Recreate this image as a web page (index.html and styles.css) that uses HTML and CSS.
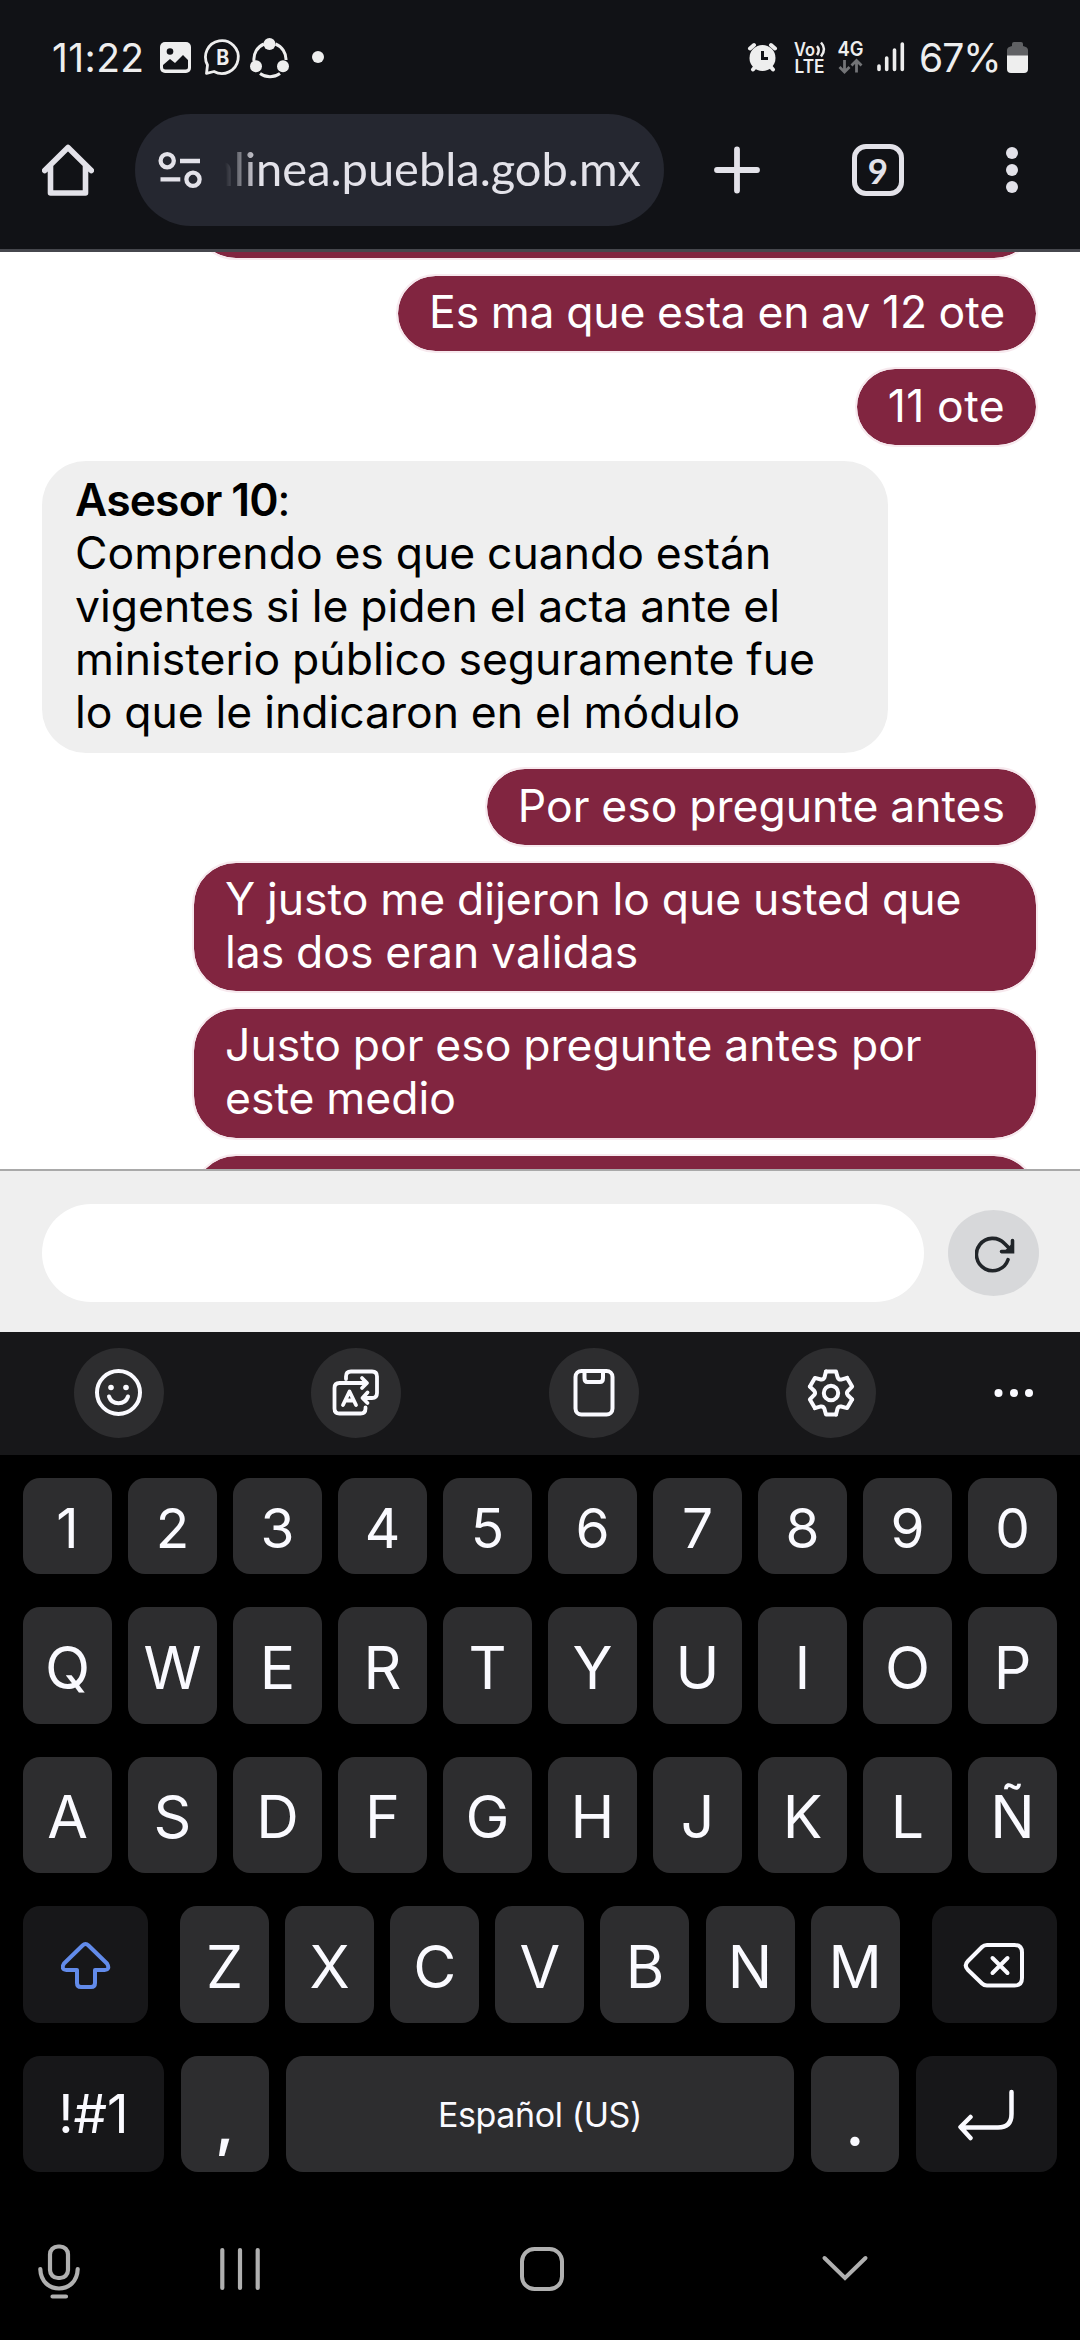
FILE: index.html
```
<!DOCTYPE html>
<html lang="es">
<head>
<meta charset="utf-8">
<title>Chat en línea</title>
<link rel="stylesheet" href="styles.css">
</head>
<body>
<header class="browser">
  <div class="status">
    <span class="clock">11:22</span>
    <svg class="notif" width="165" height="40" viewBox="160 38 165 40">
      <rect x="160" y="42" width="31" height="31" rx="5" fill="#eee"/>
      <circle cx="170" cy="51.5" r="3.3" fill="#111216"/>
      <path d="M163 65L170 59L175 63L183 55L188 60V67Q188 69.500 185.500 69.500H165.500Q163 69.500 163 67Z" fill="#111216"/>
      <path d="M207.500 65A16.400 16.400 0 1 1 214 71.500L206.500 73.300Z" fill="none" stroke="#eee" stroke-width="2.800" stroke-linejoin="round"/>
      <text x="216.300" y="65" font-family="Inter" font-weight="700" font-size="21" fill="#eee" textLength="13" lengthAdjust="spacingAndGlyphs">B</text>
      <g fill="none" stroke="#eee" stroke-width="3">
        <path d="M254 61A16.500 16.500 0 0 1 264 44M275.500 44A16.500 16.500 0 0 1 286 60M260 73.500A17 17 0 0 0 280 73.500"/>
      </g>
      <g fill="#eee"><circle cx="269.500" cy="44" r="6"/><circle cx="256" cy="66.200" r="6"/><circle cx="283" cy="66.200" r="6"/><circle cx="318" cy="57" r="6"/></g>
    </svg>
    <svg class="signals" width="159" height="36" viewBox="747 40 159 36">
      <g stroke="#eee" stroke-width="4" stroke-linecap="round" fill="none">
        <path d="M750 48.500L754 45M775 48.500L771 45M753 69.500L756 66M773 69.500L770 66"/>
      </g>
      <circle cx="762.500" cy="58" r="13" fill="#eee"/>
      <path d="M762.500 51V58.500H768" fill="none" stroke="#111216" stroke-width="3"/>
      <g fill="#eee" font-family="Inter" font-weight="600">
        <text x="794" y="55.500" font-size="18" textLength="21" lengthAdjust="spacingAndGlyphs">Vo</text>
        <text x="794.500" y="72.500" font-size="18.500" textLength="30" lengthAdjust="spacingAndGlyphs">LTE</text>
        <text x="837.500" y="55.500" font-size="20" textLength="26" lengthAdjust="spacingAndGlyphs">4G</text>
      </g>
      <path d="M817 46Q820.500 50 817 55M821 42.500Q827 49 821 56.500" fill="none" stroke="#eee" stroke-width="2.500"/>
      <path d="M844.500 60V71M839.500 67L844.500 72L849.500 67M856.500 72.500V61M851.500 65.500L856.500 60.500L861.500 65.500" fill="none" stroke="#737477" stroke-width="2.800"/>
      <path d="M879 66V69.500M886.700 58V69.500M894.500 50V69.500M902.300 44V69.500" stroke="#eee" stroke-width="3.600" stroke-linecap="round"/>
    </svg>
    <span class="percent">67%</span>
    <svg width="21" height="31" viewBox="1007 42 21 31">
      <path d="M1012 46V44Q1012 42 1014 42H1021Q1023 42 1023 44V46Q1028 47 1028 50V56H1007V50Q1007 47 1012 46Z" fill="#606164"/>
      <path d="M1007 55.500H1028V69Q1028 73 1024 73H1011Q1007 73 1007 69Z" fill="#eee"/>
    </svg>
  </div>
  <div class="toolbar">
    <svg class="home" width="52" height="54" viewBox="42 143 52 54">
      <path d="M44.700 170.500L68 147.500L91.300 170.500M50.500 166V193H85.500V166" fill="none" stroke="#e3e2e9" stroke-width="5.600" stroke-linecap="round" stroke-linejoin="round"/>
    </svg>
    <div class="omnibox">
      <svg width="44" height="38" viewBox="158 151 44 38">
        <g fill="none" stroke="#e3e2e9" stroke-width="4.300">
          <circle cx="167.200" cy="160.700" r="6.600"/><circle cx="193" cy="179.300" r="6.600"/>
          <path d="M180 161H200M160.500 179.300H180.300"/>
        </g>
      </svg>
      <div class="url"><span>enlinea.puebla.gob.mx</span></div>
    </div>
    <svg class="plus" width="46" height="48" viewBox="714 146 46 48">
      <path d="M717 170H757M737 149.500V190.500" stroke="#e3e2e9" stroke-width="5.800" stroke-linecap="round"/>
    </svg>
    <div class="tabs">9</div>
    <svg class="more" width="14" height="48" viewBox="1005 146 14 48" fill="#e3e2e9">
      <circle cx="1012" cy="153" r="6"/><circle cx="1012" cy="170" r="6"/><circle cx="1012" cy="187" r="6"/>
    </svg>
  </div>
</header>

<main class="chat">
  <div class="msg out wide cut-top"></div>
  <div class="msg out">Es ma que esta en av 12 ote</div>
  <div class="msg out short">11 ote</div>
  <div class="msg in"><b>Asesor 10</b>:<br>Comprendo es que cuando están<br>vigentes si le piden el acta ante el<br>ministerio público seguramente fue<br>lo que le indicaron en el módulo</div>
  <div class="msg out">Por eso pregunte antes</div>
  <div class="msg out wide">Y justo me dijeron lo que usted que<br>las dos eran validas</div>
  <div class="msg out wide">Justo por eso pregunte antes por<br>este medio</div>
  <div class="msg out wide cut-bottom"></div>
</main>

<div class="composer">
  <input class="field" type="text">
  <button class="reload">
    <svg width="40" height="38" viewBox="974 1237 40 38">
      <path d="M1007 1260.700A16.200 16.200 0 1 1 1003.500 1244.500L1011 1252M1000.500 1252.600H1011.500V1241.500" fill="none" stroke="#212529" stroke-width="3.600" stroke-linecap="round"/>
      <path d="M1003 1252.500H1011.500V1244Z" fill="#212529"/>
    </svg>
  </button>
</div>

<section class="keyboard">
  <div class="tools">
    <span class="tool"><svg width="48" height="50" viewBox="95 1368 48 50">
      <circle cx="118.500" cy="1392.500" r="21.500" fill="none" stroke="#fafaff" stroke-width="4"/>
      <circle cx="111" cy="1387.500" r="2.800" fill="#fafaff"/><circle cx="126" cy="1387.500" r="2.800" fill="#fafaff"/>
      <path d="M109 1396.500C112 1405.500 125 1405.500 128 1396.500" fill="none" stroke="#fafaff" stroke-width="4" stroke-linecap="round"/>
    </svg></span>
    <span class="tool"><svg width="50" height="50" viewBox="331 1368 50 50">
      <g fill="none" stroke="#fafaff" stroke-width="3.800" stroke-linecap="round" stroke-linejoin="round">
        <path d="M346 1379V1376.500Q346 1371.500 351 1371.500H372Q377 1371.500 377 1376.500V1393Q377 1398 372 1398H363M367.500 1392.500L362.500 1398L367.500 1403"/>
        <path d="M365.500 1407.500V1408.500Q365.500 1413.500 360.500 1413.500H339.500Q334.500 1413.500 334.500 1408.500V1388Q334.500 1383 339.500 1383H366M362 1378L367 1383L362 1388"/>
        <path d="M343 1405L349.500 1391.500L356 1405M345.500 1400.500H353.500"/>
      </g>
    </svg></span>
    <span class="tool"><svg width="42" height="50" viewBox="573 1368 42 50">
      <g fill="none" stroke="#fafaff" stroke-width="4" stroke-linejoin="round">
        <rect x="575.500" y="1371" width="37" height="43.500" rx="6"/>
        <path d="M584.500 1372V1378Q584.500 1382 587.500 1382H600Q603 1382 603 1378V1372"/>
      </g>
    </svg></span>
    <span class="tool"><svg width="50" height="50" viewBox="-25 -25 50 50">
      <g fill="none" stroke="#fafaff" stroke-width="4" stroke-linejoin="round" stroke-linecap="round">
        <path id="tooth" d="M-5 -21.500H5L6.700 -15.500Q7.600 -13.200 10 -13.400L16.100 -15.100"/>
        <use href="#tooth" transform="rotate(60)"/><use href="#tooth" transform="rotate(120)"/><use href="#tooth" transform="rotate(180)"/><use href="#tooth" transform="rotate(240)"/><use href="#tooth" transform="rotate(300)"/>
        <circle r="7.200"/>
      </g>
    </svg></span>
    <svg class="dots" width="40" height="10" viewBox="0 0 40 10" fill="#fafaff"><circle cx="4.500" cy="5" r="4"/><circle cx="20" cy="5" r="4"/><circle cx="35" cy="5" r="4"/></svg>
  </div>
  <div class="keys">
    <div class="row digits"><span class="key">1</span><span class="key">2</span><span class="key">3</span><span class="key">4</span><span class="key">5</span><span class="key">6</span><span class="key">7</span><span class="key">8</span><span class="key">9</span><span class="key">0</span></div>
    <div class="row"><span class="key">Q</span><span class="key">W</span><span class="key">E</span><span class="key">R</span><span class="key">T</span><span class="key">Y</span><span class="key">U</span><span class="key">I</span><span class="key">O</span><span class="key">P</span></div>
    <div class="row"><span class="key">A</span><span class="key">S</span><span class="key">D</span><span class="key">F</span><span class="key">G</span><span class="key">H</span><span class="key">J</span><span class="key">K</span><span class="key">L</span><span class="key">Ñ</span></div>
    <div class="row third">
      <span class="key dark"><svg class="shift" width="50" height="48" viewBox="61 1918 50 48"><path d="M82.500 1922.500Q85.500 1919.500 88.500 1922.500L107 1940.500Q110.500 1946.500 104.500 1947H95V1960Q95 1964 91 1964H81Q77 1964 77 1960V1947H66.500Q60.500 1946.500 64 1940.500Z" fill="none" stroke="#628bea" stroke-width="4" stroke-linejoin="round"/></svg></span>
      <span class="key">Z</span><span class="key">X</span><span class="key">C</span><span class="key">V</span><span class="key">B</span><span class="key">N</span><span class="key">M</span>
      <span class="key dark"><svg width="62" height="46" viewBox="963 1941 62 46"><g fill="none" stroke="#fafaff" stroke-width="4" stroke-linejoin="round" stroke-linecap="round"><path d="M987 1944H1014.500Q1022 1944 1022 1951.500V1977Q1022 1984.500 1014.500 1984.500H987Q984 1984.500 982 1982.500L968 1969Q963.500 1964.500 968 1960L982 1946Q984 1944 987 1944Z"/><path d="M992.500 1957L1007.500 1972M1007.500 1957L992.500 1972"/></g></svg></span>
    </div>
    <div class="row bottom">
      <span class="key dark sym">!#1</span><span class="key punct">,</span><span class="key space">Español (US)</span><span class="key punct">.</span>
      <span class="key dark"><svg width="62" height="54" viewBox="957 2086 62 54"><path d="M1012.500 2091V2113Q1012.500 2126.500 999 2126.500H962M971.500 2116L961.500 2126L971.500 2137" fill="none" stroke="#fafaff" stroke-width="4.500" stroke-linecap="round" stroke-linejoin="round"/></svg></span>
    </div>
  </div>
  <nav class="nav">
    <svg class="mic" width="44" height="58" viewBox="37 2242 44 58"><g fill="none" stroke="#b0b0b0" stroke-width="4.200" stroke-linecap="round"><rect x="50" y="2246.500" width="18" height="31.500" rx="8"/><path d="M40.300 2269C41 2295 77 2295 77.700 2269M52.500 2296.500H66"/></g></svg>
    <svg class="recents" width="44" height="46" viewBox="218 2246 44 46"><path d="M222.300 2250V2288M240 2250V2288M257.700 2250V2288" stroke="#b0b0b0" stroke-width="4.200" stroke-linecap="round"/></svg>
    <svg class="circle" width="46" height="46" viewBox="519 2246 46 46"><rect x="522" y="2249" width="40" height="40" rx="12.500" fill="none" stroke="#b0b0b0" stroke-width="4"/></svg>
    <svg class="down" width="50" height="30" viewBox="820 2253 50 30"><path d="M824.500 2258L845 2278L865.500 2258" fill="none" stroke="#b0b0b0" stroke-width="4" stroke-linecap="round"/></svg>
  </nav>
</section>
</body>
</html>
```
FILE: styles.css
```
* { box-sizing: border-box; }
body { margin: 0; width: 1080px; height: 2340px; overflow: hidden; background: #000; display: flex; flex-direction: column; font-family: Inter, Roboto, sans-serif; }
svg { display: block; flex: none; }

.browser { height: 252px; flex: none; background: #111216; border-bottom: 3px solid #46474d; }
.status { height: 114px; display: flex; align-items: center; padding: 1px 52px 0 52px; color: #eee; font-size: 39px; line-height: 40px; }
.notif, .signals { overflow: visible; }
.clock { width: 108px; letter-spacing: 0.4px; }
.signals { margin-left: auto; }
.percent { width: 88px; margin-left: 13px; letter-spacing: -1px; white-space: nowrap; }
.toolbar { height: 112px; display: flex; align-items: center; padding: 0 61px 0 42px; color: #e3e2e9; }
.omnibox { width: 529px; height: 112px; margin-left: 41px; border-radius: 56px; background: #252730; display: flex; align-items: center; padding-left: 23px; }
.url { width: 416px; margin: -4px 0 0 23px; overflow: hidden; display: flex; justify-content: flex-end; font: 47px/60px Lato, sans-serif; white-space: nowrap; -webkit-mask-image: linear-gradient(90deg, transparent, #000 34px); mask-image: linear-gradient(90deg, transparent, #000 34px); }
.plus { margin-left: 50px; }
.tabs { width: 52px; height: 52px; margin-left: 92px; border: 5.500px solid #e3e2e9; border-radius: 14px; display: flex; align-items: center; justify-content: center; font: 700 35px/40px Lato, sans-serif; }
.more { margin-left: auto; }

.chat { height: 917px; flex: none; background: #fff; overflow: hidden; display: flex; flex-direction: column; gap: 14px; padding: 0 42px; font: 44.500px/52.900px Inter, sans-serif; }
.msg { flex: none; letter-spacing: 0; word-spacing: -0.7px; white-space: nowrap; }
.out { align-self: flex-end; color: #fff; background: #812540; background-clip: padding-box; border: 2px solid #f7e9ee; border-radius: 44px; padding: 10.200px 31px 12.400px; }
.out:nth-child(2) { letter-spacing: -0.12px; }
.short { letter-spacing: 0.4px; }
.wide { width: 846px; }
.cut-top { height: 132.400px; margin-top: -124.400px; }
.cut-bottom { height: 132.400px; }
.in { align-self: flex-start; width: 846px; color: #000; background: #efefef; border-radius: 44px; padding: 13.100px 32px 14.800px 33px; }
.in b { font-weight: 600; letter-spacing: -0.9px; }

.composer { height: 163px; flex: none; background: #efefef; border-top: 2px solid #a9a9a9; display: flex; align-items: center; padding: 2px 42px 0; }
.field { width: 882px; height: 98px; border: 0; border-radius: 49px; background: #fff; padding: 0 32px; }
.reload { width: 91px; height: 86px; margin: 0 -1px 0 auto; border: 0; border-radius: 50%; background: #d7d8da; padding: 4px 0 0 2px; display: flex; align-items: center; justify-content: center; }

.keyboard { flex: 1; background: #000; }
.tools { height: 123px; background: #171719; display: flex; align-items: center; padding: 0 46px 1px 74px; }
.tool { width: 90px; height: 90px; flex: none; margin-right: 147.300px; border-radius: 50%; background: #2d2d2f; display: flex; align-items: center; justify-content: center; }
.tool:nth-child(4) { margin-right: 0; }
.dots { margin-left: auto; }
.keys { padding: 23px 23px 0; display: grid; grid-template-rows: 96px 117px 116px 117px 116px; row-gap: 33px; color: #fafaff; font-size: 59px; line-height: 60px; }
.row { display: grid; grid-template-columns: repeat(10, 1fr); column-gap: 16px; }
.digits { font-size: 55px; }
.key { background: #2d2d2f; border-radius: 17px; display: flex; align-items: center; justify-content: center; padding-top: 4px; }
.dark { background: #171719; padding-top: 0; }
.third { grid-template-columns: 141px repeat(7, 89px) 141px; column-gap: 16.100px; }
.third .key:first-child { margin-right: 16px; }
.third .key:last-child { margin-left: 16px; }
.bottom { grid-template-columns: 141px 88px 508px 88px 141px; column-gap: 17px; }
.sym { font-size: 53px; letter-spacing: 0; }
.space { font-size: 34px; letter-spacing: -0.400px; padding-top: 1px; }
.punct { padding-top: 19px; font-weight: 600; }
.nav { display: flex; align-items: center; height: 58px; margin-top: 70px; padding-left: 37px; }
.recents { margin-left: 137px; margin-top: -4px; }
.circle { margin-left: 257px; margin-top: -4px; }
.down { margin-left: 255px; margin-top: -6px; }
```
